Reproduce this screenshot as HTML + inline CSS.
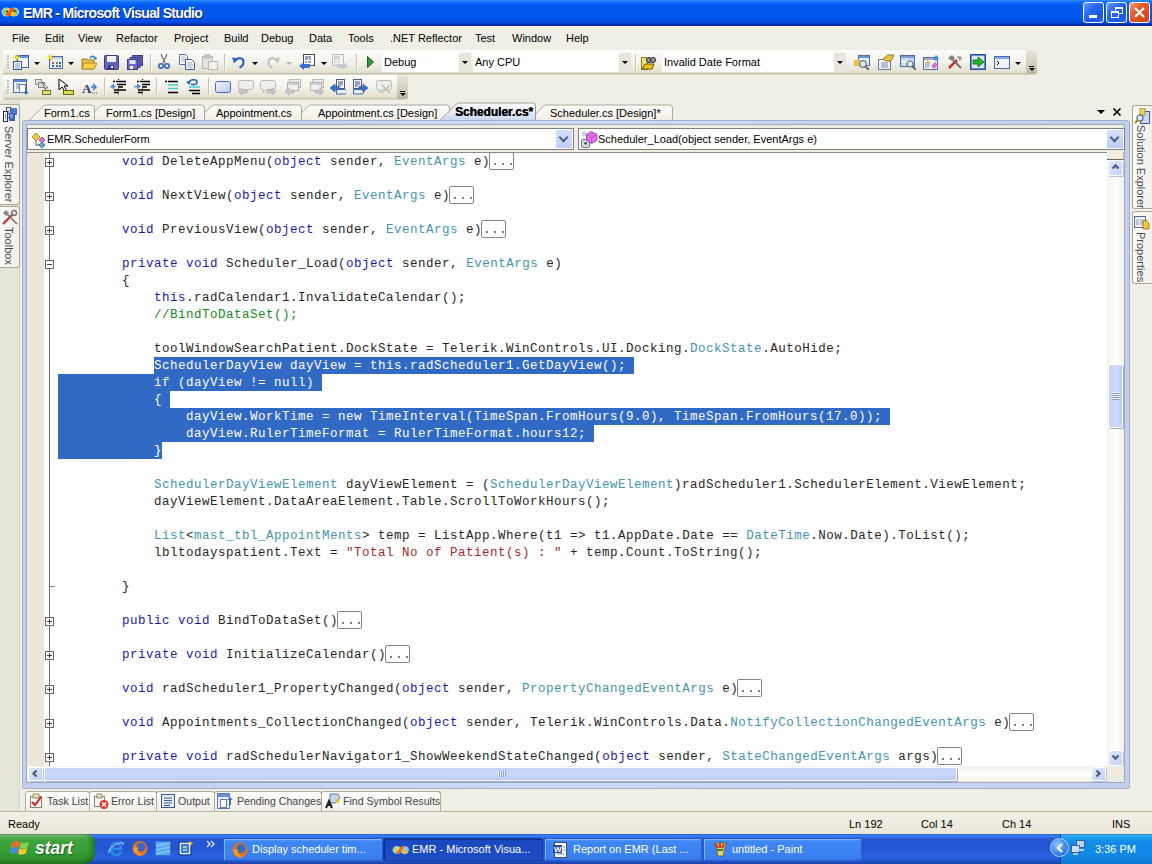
<!DOCTYPE html><html><head><meta charset="utf-8"><style>*{margin:0;padding:0;box-sizing:border-box}
html,body{width:1152px;height:864px;overflow:hidden;background:#F0EFE6;font-family:"Liberation Sans",sans-serif;font-size:11px;color:#000;position:relative}
.a{position:absolute}
#title{left:0;top:0;width:1152px;height:26px;background:linear-gradient(#3A93FF 0px,#1C7CFF 1px,#0A66F8 3px,#0059EF 6px,#0057EC 17px,#0050E4 21px,#0046D6 23px,#0036BA 24px,#0024A0 26px)}
#ttext{left:23px;top:5px;color:#fff;font-weight:bold;font-size:14px;letter-spacing:-0.68px;text-shadow:1px 1px 0 #0A1E7A;white-space:nowrap}
#menu{left:0;top:26px;width:1152px;height:24px;background:#F0EFE5;border-top:1px solid #FBFBF6}
.mi{top:32px;white-space:nowrap}
.tb{position:absolute;background:linear-gradient(#FCFCF9 0%,#F4F3EC 45%,#E6E3D3 85%,#D6D2C0 100%);border-radius:0 3px 3px 0}
.ico{position:absolute;width:16px;height:16px}
.dd{position:absolute;width:0;height:0;border-left:3px solid transparent;border-right:3px solid transparent;border-top:3px solid #000}
.sep{position:absolute;width:1px;height:17px;background:#C5C2B2;box-shadow:1px 0 0 #FFF}
.combo{position:absolute;background:#fff;height:19px;top:53px;white-space:nowrap;padding-left:2px;line-height:19px}
.cbtn{position:absolute;right:0;top:0;width:12px;height:19px;background:#E8E6DC}
.cbtn:after{content:"";position:absolute;left:3px;top:8px;border-left:3px solid transparent;border-right:3px solid transparent;border-top:3px solid #000}
.dbox{background:#fff;border:1px solid #7F7F7F}
.dbtn{position:absolute;right:1px;top:1px;width:16px;height:18px;background:linear-gradient(#D6E1FB,#BCCDF6)}
.dbtn:after{content:"";position:absolute;left:4px;top:4px;width:5px;height:5px;border-right:2px solid #4D6185;border-bottom:2px solid #4D6185;transform:rotate(45deg)}
.dtext{white-space:nowrap}
.code{font-family:"Liberation Mono",monospace;font-size:12.5px;letter-spacing:0.5px;line-height:17px;white-space:pre;color:#262626}
.k{color:#1A1AB4}.t{color:#4494B0}.s{color:#A52A2A}.c{color:#168A16}
.box{position:absolute;width:25px;height:18px;border:1px solid #858585;border-radius:2px;background:#fff}
.dots{position:absolute;left:4px;top:10px;width:2px;height:2px;background:#808080;box-shadow:8px 0 0 #808080,16px 0 0 #808080}
.ob{position:absolute;left:45px;width:9px;height:9px;border:1px solid #666;background:#fff}
.ob:before{content:"";position:absolute;left:1px;top:3px;width:5px;height:1px;background:#404040}
.ob.p:after{content:"";position:absolute;left:3px;top:1px;width:1px;height:5px;background:#404040}
.sbtn{position:absolute;width:16px;height:15px;background:linear-gradient(#DDE6FB,#C3D2F6);border-radius:2px;border:1px solid #BFCDF3}
.vt{position:absolute;transform-origin:0 0;transform:rotate(90deg);white-space:nowrap;color:#4A4A4A}
.task{position:absolute;top:838px;height:23px;border-radius:2px;color:#fff;font-size:11px;line-height:21px;white-space:nowrap;padding-left:28px}
</style></head><body>
<div id="title" class="a"></div>
<div id="ttext" class="a">EMR - Microsoft Visual Studio</div>
<svg class="a" style="left:1px;top:6px" width="19" height="12" viewBox="0 0 19 12"><ellipse cx="5.5" cy="6" rx="5" ry="4.6" fill="#CDEBD0" opacity=".85"/><ellipse cx="13" cy="6" rx="5.2" ry="4.6" fill="#BCE0F0" opacity=".85"/><ellipse cx="5.5" cy="6" rx="3.6" ry="3.4" fill="#8CCB6A"/><ellipse cx="13" cy="6.3" rx="3.8" ry="3.4" fill="#6ABF7A"/><circle cx="6.5" cy="5" r="2.2" fill="#F5D23A"/><path d="M5 9.5L9.5 2h4L8.5 10.5z" fill="#F05A1E"/><circle cx="12.5" cy="8" r="2.4" fill="#F5C51E"/><circle cx="6" cy="5.5" r="1" fill="#1A1A1A"/><circle cx="13.6" cy="5" r="1" fill="#1A1A1A"/></svg>
<div class="a" style="left:1083px;top:2px;width:21px;height:21px;border:1px solid #fff;border-radius:3px;background:linear-gradient(135deg,#6A9CFF 0%,#2A6AF4 35%,#1A58E8 70%,#2A62E8 100%)"><div class="a" style="left:5px;top:12px;width:8px;height:3px;background:#fff"></div></div>
<div class="a" style="left:1106px;top:2px;width:21px;height:21px;border:1px solid #fff;border-radius:3px;background:linear-gradient(135deg,#6A9CFF 0%,#2A6AF4 35%,#1A58E8 70%,#2A62E8 100%)"><div class="a" style="left:8px;top:4px;width:8px;height:7px;border:1px solid #fff;border-top-width:2px"></div><div class="a" style="left:4px;top:8px;width:8px;height:7px;border:1px solid #fff;border-top-width:2px;background:#2A64EE"></div></div>
<div class="a" style="left:1129px;top:2px;width:21px;height:21px;border:1px solid #fff;border-radius:3px;background:linear-gradient(135deg,#F0A080 0%,#E4602E 35%,#D8481A 75%,#D04A20 100%)"><svg class="a" style="left:3px;top:3px" width="13" height="13" viewBox="0 0 13 13"><path d="M2 2l9 9M11 2l-9 9" stroke="#fff" stroke-width="2.2"/></svg></div>

<div id="menu" class="a"></div>
<div class="a mi" style="left:12px">File</div>
<div class="a mi" style="left:45px">Edit</div>
<div class="a mi" style="left:78px">View</div>
<div class="a mi" style="left:116px">Refactor</div>
<div class="a mi" style="left:174px">Project</div>
<div class="a mi" style="left:224px">Build</div>
<div class="a mi" style="left:261px">Debug</div>
<div class="a mi" style="left:309px">Data</div>
<div class="a mi" style="left:348px">Tools</div>
<div class="a mi" style="left:390px">.NET Reflector</div>
<div class="a mi" style="left:475px">Test</div>
<div class="a mi" style="left:512px">Window</div>
<div class="a mi" style="left:566px">Help</div>
<div class="tb" style="left:3px;top:50px;width:1034px;height:25px"></div>
<div class="a" style="left:4px;top:73px;width:1032px;height:1px;background:#C9C5B2"></div>
<div class="a" style="left:7px;top:55px;width:2px;height:2px;background:#C1BEB0;box-shadow:1px 1px 0 #fff"></div>
<div class="a" style="left:7px;top:58px;width:2px;height:2px;background:#C1BEB0;box-shadow:1px 1px 0 #fff"></div>
<div class="a" style="left:7px;top:61px;width:2px;height:2px;background:#C1BEB0;box-shadow:1px 1px 0 #fff"></div>
<div class="a" style="left:7px;top:64px;width:2px;height:2px;background:#C1BEB0;box-shadow:1px 1px 0 #fff"></div>
<div class="a" style="left:7px;top:67px;width:2px;height:2px;background:#C1BEB0;box-shadow:1px 1px 0 #fff"></div>
<div class="a" style="left:1026px;top:50px;width:11px;height:24px;border-radius:0 3px 3px 0;background:linear-gradient(#E9E7DC,#CDCABA 70%,#B8B49F)"></div>
<div class="a" style="left:1029px;top:66px;width:5px;height:1px;background:#000"></div>
<div class="a" style="left:1029px;top:68px;width:0;height:0;border-left:3px solid transparent;border-right:3px solid transparent;border-top:3px solid #000"></div>
<div class="tb" style="left:3px;top:75px;width:405px;height:25px"></div>
<div class="a" style="left:4px;top:98px;width:403px;height:1px;background:#C9C5B2"></div>
<div class="a" style="left:7px;top:80px;width:2px;height:2px;background:#C1BEB0;box-shadow:1px 1px 0 #fff"></div>
<div class="a" style="left:7px;top:83px;width:2px;height:2px;background:#C1BEB0;box-shadow:1px 1px 0 #fff"></div>
<div class="a" style="left:7px;top:86px;width:2px;height:2px;background:#C1BEB0;box-shadow:1px 1px 0 #fff"></div>
<div class="a" style="left:7px;top:89px;width:2px;height:2px;background:#C1BEB0;box-shadow:1px 1px 0 #fff"></div>
<div class="a" style="left:7px;top:92px;width:2px;height:2px;background:#C1BEB0;box-shadow:1px 1px 0 #fff"></div>
<div class="a" style="left:397px;top:75px;width:11px;height:24px;border-radius:0 3px 3px 0;background:linear-gradient(#E9E7DC,#CDCABA 70%,#B8B49F)"></div>
<div class="a" style="left:400px;top:91px;width:5px;height:1px;background:#000"></div>
<div class="a" style="left:400px;top:93px;width:0;height:0;border-left:3px solid transparent;border-right:3px solid transparent;border-top:3px solid #000"></div>
<svg class="a" style="left:13px;top:54px" width="16" height="16" viewBox="0 0 16 16"><rect x="4.5" y="1.5" width="11" height="12" fill="#F4F8FF" stroke="#3B5CAA"/><rect x="5" y="2" width="10" height="2" fill="#6A96E0"/><path d="M3.5 0v7M0 3.5h7M1 1l5 5M6 1L1 6" stroke="#F2D438" stroke-width="1"/><rect x="0.5" y="7.5" width="8" height="8" fill="#fff" stroke="#3B5CAA"/><path d="M2 10h5M2 12h5M2 14h5" stroke="#7A90C8"/></svg>
<div class="dd" style="left:34px;top:62px;border-top-color:#000"></div>
<svg class="a" style="left:47px;top:54px" width="16" height="16" viewBox="0 0 16 16"><rect x="2.5" y="2.5" width="13" height="12" fill="#EEF4FA" stroke="#4C6CA8"/><rect x="3" y="3" width="12" height="2" fill="#BFD0EA"/><path d="M3.5 0v7M0 3.5h7M1 1l5 5M6 1L1 6" stroke="#F2D438" stroke-width="1"/><rect x="5" y="8" width="2" height="2" fill="#C04060"/><rect x="9" y="8" width="2" height="2" fill="#5A9A3A"/><rect x="12" y="8" width="2" height="2" fill="#4060B0"/><rect x="5" y="11" width="2" height="2" fill="#4060B0"/><rect x="9" y="11" width="2" height="2" fill="#4060B0"/><rect x="12" y="11" width="2" height="2" fill="#3A7A3A"/></svg>
<div class="dd" style="left:68px;top:62px;border-top-color:#000"></div>
<svg class="a" style="left:81px;top:55px" width="16" height="16" viewBox="0 0 16 16"><path d="M1 4h5l1 1h6v9H1z" fill="#E8C04A" stroke="#A07A18"/><path d="M3 8h13l-3 6H1z" fill="#F7CF4A" stroke="#B08A20"/><path d="M9 3c2-3 5-2 5 1" fill="none" stroke="#3C78C8" stroke-width="1.5"/><path d="M12 3l3 2 1-3z" fill="#3C78C8"/></svg>
<svg class="a" style="left:104px;top:55px" width="16" height="16" viewBox="0 0 16 16"><rect x="0.5" y="0.5" width="14" height="14" rx="1" fill="#6264BC" stroke="#3A3C88"/><rect x="3" y="1" width="9" height="6" fill="#F2F4FC"/><rect x="4" y="10" width="6" height="4" fill="#3A3C80"/><rect x="7" y="11" width="2" height="2" fill="#fff"/></svg>
<svg class="a" style="left:127px;top:55px" width="16" height="16" viewBox="0 0 16 16"><rect x="5.5" y="0.5" width="10" height="10" fill="#6264BC" stroke="#3A3C88"/><rect x="3" y="2.5" width="10" height="10" fill="#6264BC" stroke="#3A3C88"/><rect x="0.5" y="4.5" width="10" height="10" fill="#6A6CC4" stroke="#3A3C88"/><rect x="2.5" y="5" width="6" height="4" fill="#E0E4F8"/><rect x="3" y="11" width="3" height="3" fill="#fff"/></svg>
<div class="sep" style="left:150px;top:54px"></div>
<svg class="a" style="left:156px;top:54px" width="16" height="16" viewBox="0 0 16 16"><path d="M5 0l4 9M11 0L7 9" stroke="#6A6A70" stroke-width="1.1"/><circle cx="5" cy="12" r="2.2" fill="none" stroke="#2F5FC0" stroke-width="1.5"/><circle cx="11" cy="12" r="2.2" fill="none" stroke="#2F5FC0" stroke-width="1.5"/></svg>
<svg class="a" style="left:179px;top:54px" width="16" height="16" viewBox="0 0 16 16"><path d="M0.5 0.5h6l2 2v8h-8z" fill="#fff" stroke="#5070B8"/><path d="M2 3h4M2 5h5M2 7h5" stroke="#7A90C8" stroke-width=".7"/><path d="M6.5 5.5h6l3 3v7h-9z" fill="#fff" stroke="#3A5AA8"/><path d="M8 9h5M8 11h6M8 13h6" stroke="#6A84C0" stroke-width=".7"/></svg>
<svg class="a" style="left:202px;top:54px" width="16" height="16" viewBox="0 0 16 16"><rect x="0.5" y="2.5" width="10" height="12" fill="#E4E4E0" stroke="#B8B8B4"/><rect x="3" y="1" width="5" height="3" fill="#D0D0CC" stroke="#B0B0AC"/><rect x="6.5" y="7.5" width="9" height="8" fill="#F0F0EC" stroke="#B8B8B4"/></svg>
<div class="sep" style="left:224px;top:54px"></div>
<svg class="a" style="left:231px;top:54px" width="16" height="16" viewBox="0 0 16 16"><path d="M4.5 6.5C7 3 12.5 3.5 12.5 8c0 2.5-1.5 4.5-4 5.5" fill="none" stroke="#2F62C8" stroke-width="2.2"/><path d="M1 3.5l6.5 1-4.5 5z" fill="#2F62C8"/></svg>
<div class="dd" style="left:252px;top:62px;border-top-color:#000"></div>
<svg class="a" style="left:265px;top:54px" width="16" height="16" viewBox="0 0 16 16"><path d="M11.5 6.5C9 3 3.5 3.5 3.5 8c0 2.5 1.5 4.5 4 5.5" fill="none" stroke="#C4C4C0" stroke-width="2.2"/><path d="M15 3.5l-6.5 1 4.5 5z" fill="#C4C4C0"/></svg>
<div class="dd" style="left:286px;top:62px;border-top-color:#B8B8B4"></div>
<svg class="a" style="left:299px;top:54px" width="16" height="16" viewBox="0 0 16 16"><rect x="4.5" y="0.5" width="11" height="11" fill="#fff" stroke="#404850"/><path d="M6 3h6M6 5h3M10 5h2M6 8h2M9 8h3" stroke="#2A3E9A"/><path d="M0 12l5-4v2h6v4H5v2z" fill="#3A70D0"/></svg>
<div class="dd" style="left:321px;top:62px;border-top-color:#000"></div>
<svg class="a" style="left:332px;top:54px" width="16" height="16" viewBox="0 0 16 16"><rect x="0.5" y="0.5" width="11" height="11" fill="#F4F4F2" stroke="#BBBBB8"/><path d="M2 3h6M2 5h3M6 5h2M2 8h2M5 8h3" stroke="#B4B4B8"/><path d="M16 12l-5-4v2H5v4h6v2z" fill="#C8C8D4"/></svg>
<div class="sep" style="left:356px;top:54px"></div>
<svg class="a" style="left:364px;top:55px" width="16" height="16" viewBox="0 0 16 16"><path d="M3.5 1.5l6 5.5-6 5.5z" fill="#2E9A3A" stroke="#1E5A24"/></svg>
<div class="combo" style="left:382px;width:89px">Debug<div class="cbtn"></div></div>
<div class="combo" style="left:473px;width:158px">Any CPU<div class="cbtn"></div></div>
<div class="sep" style="left:635px;top:54px"></div>
<svg class="a" style="left:640px;top:55px" width="16" height="16" viewBox="0 0 16 16"><path d="M1.5 2.5h5l1 2v10h-6z" fill="#F0E27A" stroke="#8A7A20"/><path d="M2 14l3-5h9l-2 5z" fill="#F3C41A" stroke="#6A5010"/><circle cx="9" cy="5" r="2.5" fill="#999" stroke="#222"/><circle cx="13" cy="5" r="2.5" fill="#999" stroke="#222"/></svg>
<div class="combo" style="left:662px;width:184px">Invalid Date Format<div class="cbtn"></div></div>
<svg class="a" style="left:854px;top:54px" width="16" height="16" viewBox="0 0 16 16"><rect x="4.5" y="1.5" width="11" height="10" fill="#EAF0FA" stroke="#4A6AB0"/><rect x="5" y="2" width="10" height="2" fill="#6A90D8"/><path d="M0 6h6v6H0z" fill="#E8C04A"/><circle cx="9" cy="10" r="3.3" fill="#D8E8F4" stroke="#707880" stroke-width="1.2"/><path d="M11 12l4 4" stroke="#606870" stroke-width="1.8"/></svg>
<svg class="a" style="left:878px;top:54px" width="16" height="16" viewBox="0 0 16 16"><rect x="0.5" y="5.5" width="12" height="10" fill="#F2F5FA" stroke="#6A7A9A"/><path d="M3 9h7M3 11h7M3 13h7" stroke="#7A8AAA"/><path d="M5 5l5-4h6l-3 6H7z" fill="#E8C048" stroke="#9A7A20"/></svg>
<svg class="a" style="left:900px;top:54px" width="16" height="16" viewBox="0 0 16 16"><rect x="0.5" y="1.5" width="14" height="11" fill="#CFDCF0" stroke="#4A6AB0"/><rect x="1" y="2" width="13" height="2" fill="#7A9AD8"/><path d="M2 8c3-2 6 2 8 0" stroke="#fff" stroke-width="1.5" fill="none"/><circle cx="10" cy="10" r="3" fill="#E0ECF8" stroke="#607080" stroke-width="1.2"/><path d="M12 12l4 4" stroke="#506070" stroke-width="1.8"/></svg>
<svg class="a" style="left:923px;top:54px" width="16" height="16" viewBox="0 0 16 16"><rect x="0.5" y="3.5" width="14" height="12" fill="#F4F6FA" stroke="#5A6A9A"/><rect x="1" y="4" width="13" height="2" fill="#9AAAD0"/><path d="M2 9h5M2 11h5M2 13h4" stroke="#8090B0"/><path d="M8 12l4-4 3 3-4 4z" fill="#D070C8"/><path d="M10 5l3-4 3 3-3 3z" fill="#4A90D8"/><path d="M4 6l3 2-3 2z" fill="#F0C020"/></svg>
<svg class="a" style="left:947px;top:54px" width="16" height="16" viewBox="0 0 16 16"><path d="M2 14l8-8" stroke="#D03030" stroke-width="2.5"/><path d="M14 14L6 6" stroke="#707070" stroke-width="2"/><path d="M1 4l4-3 3 3-3 3z" fill="#808080"/><path d="M10 2l5 1-2 4z" fill="#909090"/></svg>
<svg class="a" style="left:970px;top:54px" width="16" height="16" viewBox="0 0 16 16"><rect x="0.5" y="0.5" width="15" height="15" fill="#6090D8" stroke="#2A4A90"/><rect x="2" y="2" width="12" height="12" fill="#D8E6F8"/><path d="M3 6h5V3l6 5-6 5v-3H3z" fill="#2AB02A" stroke="#107010" stroke-width=".8"/></svg>
<svg class="a" style="left:994px;top:54px" width="16" height="16" viewBox="0 0 16 16"><rect x="0.5" y="2.5" width="15" height="12" fill="#F0F4FC" stroke="#4A6AB0"/><rect x="1" y="3" width="14" height="2" fill="#8AAAE0"/><path d="M3 7l2 2-2 2" stroke="#000" fill="none"/></svg>
<div class="dd" style="left:1015px;top:62px;border-top-color:#000"></div>
<svg class="a" style="left:13px;top:79px" width="16" height="16" viewBox="0 0 16 16"><rect x="0.5" y="0.5" width="13" height="13" fill="#F4F8FC" stroke="#4A6AB0"/><rect x="1" y="1" width="12" height="2" fill="#5A86D6"/><path d="M3 5h4M3 7h4M3 9h4" stroke="#7A8AAA"/><rect x="6.5" y="5.5" width="6" height="8" fill="#fff" stroke="#6A7AAA"/><path d="M13 8v7M11 13l2 2 2-2" stroke="#3A70C0" stroke-width="1.2" fill="none"/></svg>
<svg class="a" style="left:35px;top:79px" width="16" height="16" viewBox="0 0 16 16"><rect x="0.5" y="0.5" width="6" height="5" fill="#E8E8E8" stroke="#888"/><rect x="3.5" y="3.5" width="6" height="5" fill="#D8D8D8" stroke="#888"/><path d="M7 3l6 6h-3l1 3z" fill="#fff" stroke="#777"/><rect x="7.5" y="11.5" width="8" height="4" fill="#E6E070" stroke="#707030"/></svg>
<svg class="a" style="left:58px;top:79px" width="16" height="16" viewBox="0 0 16 16"><path d="M1 0v11l3-3 3 5 2-1-3-5h4z" fill="#fff" stroke="#000"/><rect x="5.5" y="11.5" width="10" height="4" fill="#D8E050" stroke="#606818"/></svg>
<svg class="a" style="left:82px;top:79px" width="16" height="16" viewBox="0 0 16 16"><text x="0" y="14" font-family="Liberation Serif" font-weight="bold" font-size="13" fill="#2A3A78">A</text><path d="M9 8h5M11 5l3 3-3 3" stroke="#4A7AD0" stroke-width="1.6" fill="none"/><path d="M10 14h1M12 14h1M14 14h1" stroke="#444"/></svg>
<div class="sep" style="left:104px;top:78px"></div>
<svg class="a" style="left:110px;top:79px" width="16" height="16" viewBox="0 0 16 16"><path d="M3 2.5h2M6 2.5h10M7 5.5h9M8 8h5M4 11h12M4 13.5h5" stroke="#000" stroke-width="1.4"/><path d="M8 0.5h1M8 16h1M8 10h1" stroke="#000"/><path d="M0 7.5l4-3v6z" fill="#5A88D8"/><path d="M3 7.5h3" stroke="#5A88D8" stroke-width="1.4"/></svg>
<svg class="a" style="left:134px;top:79px" width="16" height="16" viewBox="0 0 16 16"><path d="M3 2.5h2M6 2.5h10M8 5.5h8M8 8h5M4 11h12M4 13.5h5" stroke="#000" stroke-width="1.4"/><path d="M8 0.5h1M8 16h1M8 10h1" stroke="#000"/><path d="M7 7.5l-4-3v6z" fill="#5A88D8"/><path d="M0 7.5h4" stroke="#5A88D8" stroke-width="1.4"/></svg>
<div class="sep" style="left:156px;top:78px"></div>
<svg class="a" style="left:164px;top:79px" width="16" height="16" viewBox="0 0 16 16"><path d="M1 2.5h2M4 2.5h10M4 13.5h10" stroke="#000" stroke-width="1.3"/><path d="M4 6h10M4 9.5h10" stroke="#40D0D0" stroke-width="1.5"/></svg>
<svg class="a" style="left:186px;top:79px" width="16" height="16" viewBox="0 0 16 16"><path d="M4 3c0-3 7-3 7 0s-4 3-6 2" fill="none" stroke="#2A6AC0" stroke-width="1.6"/><path d="M0 3.5l4-2.5v5z" fill="#2A6AC0"/><path d="M3 8h11" stroke="#40D0D0" stroke-width="1.5"/><path d="M3 11.5h11M6 14.5h8" stroke="#000" stroke-width="1.3"/></svg>
<div class="sep" style="left:208px;top:78px"></div>
<svg class="a" style="left:215px;top:80px" width="16" height="16" viewBox="0 0 16 16"><defs><linearGradient id="rg" x1="0" y1="0" x2="1" y2="1"><stop offset="0" stop-color="#F4F6FE"/><stop offset="1" stop-color="#B8C8F0"/></linearGradient></defs><rect x="0.5" y="1.5" width="15" height="11" rx="2" fill="url(#rg)" stroke="#4A6AC0"/></svg>
<svg class="a" style="left:238px;top:79px" width="16" height="16" viewBox="0 0 16 16"><path d="M2.5 1.5h11a2 2 0 0 1 2 2v5a2 2 0 0 1-2 2h-7l-3 3v-3h-1a2 2 0 0 1-2-2v-5a2 2 0 0 1 2-2z" fill="#EEEEEA" stroke="#B8B8B4"/><path d="M0 12.5l4-3.5v2h5v3H4v2z" fill="#C8C8CC" stroke="#A8A8AC" stroke-width=".6"/></svg>
<svg class="a" style="left:260px;top:79px" width="16" height="16" viewBox="0 0 16 16"><path d="M2.5 1.5h11a2 2 0 0 1 2 2v5a2 2 0 0 1-2 2h-7l-3 3v-3h-1a2 2 0 0 1-2-2v-5a2 2 0 0 1 2-2z" fill="#EEEEEA" stroke="#B8B8B4"/><path d="M16 12.5l-4-3.5v2H7v3h5v2z" fill="#C8C8CC" stroke="#A8A8AC" stroke-width=".6"/></svg>
<svg class="a" style="left:285px;top:79px" width="16" height="16" viewBox="0 0 16 16"><rect x="4.5" y="0.5" width="11" height="8" fill="#E8E8E6" stroke="#B8B8B4"/><rect x="2.5" y="3.5" width="11" height="8" fill="#F0F0EE" stroke="#B0B0AC"/><path d="M3 5h10" stroke="#C8C8C4" stroke-width="1.5"/><path d="M0 12.5l4-3.5v2h5v3H4v2z" fill="#C8C8CC" stroke="#A8A8AC" stroke-width=".6"/></svg>
<svg class="a" style="left:308px;top:79px" width="16" height="16" viewBox="0 0 16 16"><rect x="4.5" y="0.5" width="11" height="8" fill="#E8E8E6" stroke="#B8B8B4"/><rect x="2.5" y="3.5" width="11" height="8" fill="#F0F0EE" stroke="#B0B0AC"/><path d="M3 5h10" stroke="#C8C8C4" stroke-width="1.5"/><path d="M16 12.5l-4-3.5v2H7v3h5v2z" fill="#C8C8CC" stroke="#A8A8AC" stroke-width=".6"/></svg>
<svg class="a" style="left:330px;top:79px" width="16" height="16" viewBox="0 0 16 16"><rect x="6.5" y="0.5" width="8" height="9" fill="#F8F8FA" stroke="#4A5A8A"/><path d="M8 3h5M8 5h5M8 7h3" stroke="#3A4A7A"/><path d="M6.5 10.5h8a1.5 1.5 0 0 1 0 4.5h-8z" fill="#E8EEF8" stroke="#4A6AB0"/><path d="M0 9l5-4v2.5h4v3H5V13z" fill="#3A70D0" stroke="#2A50A0" stroke-width=".6"/></svg>
<svg class="a" style="left:352px;top:79px" width="16" height="16" viewBox="0 0 16 16"><rect x="1.5" y="0.5" width="8" height="9" fill="#F8F8FA" stroke="#4A5A8A"/><path d="M3 3h5M3 5h5M3 7h3" stroke="#3A4A7A"/><path d="M1.5 10.5h8a1.5 1.5 0 0 1 0 4.5h-8z" fill="#E8EEF8" stroke="#4A6AB0"/><path d="M16 9l-5-4v2.5H7v3h4V13z" fill="#3A70D0" stroke="#2A50A0" stroke-width=".6"/></svg>
<svg class="a" style="left:376px;top:79px" width="16" height="16" viewBox="0 0 16 16"><path d="M2.5 1.5h11a2 2 0 0 1 2 2v5a2 2 0 0 1-2 2h-7l-3 3v-3h-1a2 2 0 0 1-2-2v-5a2 2 0 0 1 2-2z" fill="#EEEEEA" stroke="#B8B8B4"/><path d="M6 6l8 8M14 6l-8 8" stroke="#C0C0BC" stroke-width="1.5"/></svg>
<div class="a" style="left:0;top:100px;width:20px;height:711px;background:#E4E4D7;border-right:1px solid #D6D5C6"></div>
<div class="a" style="left:0;top:104px;width:20px;height:101px;background:linear-gradient(90deg,#FCFCFA,#F2F0E8);border:1px solid #ACA899;border-left:none;border-radius:0 3px 3px 0"></div>
<svg class="a" style="left:2px;top:106px" width="17" height="17" viewBox="0 0 17 17"><rect x="4.5" y="1.5" width="4" height="10" fill="#F4F6FA" stroke="#404A70"/><rect x="1.5" y="5.5" width="4" height="10" fill="#F4F6FA" stroke="#2A2A6A"/><path d="M3.5 8v5M6.5 4v5" stroke="#8A90B0"/><rect x="9" y="2" width="6" height="7" fill="#4A7AD8"/><rect x="7" y="7" width="6" height="8" fill="#3A62C8"/><rect x="8" y="8" width="3" height="4" fill="#6A9AF0"/></svg>
<div class="vt" style="left:15px;top:126px">Server Explorer</div>
<div class="a" style="left:0;top:206px;width:20px;height:62px;background:linear-gradient(90deg,#FCFCFA,#F2F0E8);border:1px solid #ACA899;border-left:none;border-radius:0 3px 3px 0"></div>
<svg class="a" style="left:2px;top:209px" width="16" height="16" viewBox="0 0 16 16"><path d="M1 15L11 5" stroke="#C03030" stroke-width="2.2"/><path d="M15 15L5 5" stroke="#707070" stroke-width="1.6"/><path d="M1 4l3-3 3 3-3 3z" fill="#888"/><circle cx="12" cy="4" r="2.5" fill="none" stroke="#777" stroke-width="1.4"/></svg>
<div class="vt" style="left:15px;top:227px">Toolbox</div>
<div class="a" style="left:1132px;top:105px;width:20px;height:104px;background:linear-gradient(90deg,#FCFCFA,#F2F0E8);border:1px solid #ACA899;border-right:none;border-radius:3px 0 0 3px"></div>
<svg class="a" style="left:1134px;top:108px" width="16" height="16" viewBox="0 0 16 16"><rect x="6.5" y="3.5" width="9" height="12" fill="#C8D8F0" stroke="#3A5AA8"/><path d="M6 0h5v7H6z" fill="#F0D060" stroke="#A08020" stroke-width=".8"/><circle cx="6" cy="10" r="3" fill="#E0ECF8" stroke="#606870" stroke-width="1.2"/><path d="M4 12l-3 3" stroke="#B08030" stroke-width="2"/></svg>
<div class="vt" style="left:1147px;top:125px">Solution Explorer</div>
<div class="a" style="left:1132px;top:211px;width:20px;height:73px;background:linear-gradient(90deg,#FCFCFA,#F2F0E8);border:1px solid #ACA899;border-right:none;border-radius:3px 0 0 3px"></div>
<svg class="a" style="left:1134px;top:214px" width="16" height="16" viewBox="0 0 16 16"><rect x="0.5" y="2.5" width="11" height="11" fill="#F0F4FA" stroke="#5A6A9A"/><path d="M2 6h3M2 8h3M2 10h3M6 6h4M6 8h4M6 10h4" stroke="#8A9ABA"/><path d="M9 7l3-1 3 4v5H9z" fill="#F0C840" stroke="#8A6A10" stroke-width=".8"/></svg>
<div class="vt" style="left:1147px;top:232px">Properties</div>

<svg class="a" style="left:0;top:0" width="1152" height="130" viewBox="0 0 1152 130"><defs><linearGradient id="gi" x1="0" y1="0" x2="0" y2="1"><stop offset="0" stop-color="#FDFDFB"/><stop offset="1" stop-color="#F1EFE6"/></linearGradient><linearGradient id="ga" x1="0" y1="0" x2="0" y2="1"><stop offset="0" stop-color="#FCFDFE"/><stop offset=".5" stop-color="#E9EFF8"/><stop offset="1" stop-color="#C9D8F0"/></linearGradient></defs><path d="M529 120L543 106Q544 105 546 105H669Q672 105 672 108V120Z" fill="url(#gi)" stroke="none"/><path d="M529 120L543 106Q544 105 546 105H669Q672 105 672 108V120" fill="none" stroke="#ACA899" stroke-width="1" transform="translate(0.5,0)"/><path d="M294 120L308 106Q309 105 311 105H446Q449 105 449 108V120Z" fill="url(#gi)" stroke="none"/><path d="M294 120L308 106Q309 105 311 105H446Q449 105 449 108V120" fill="none" stroke="#ACA899" stroke-width="1" transform="translate(0.5,0)"/><path d="M197 120L211 106Q212 105 214 105H298Q301 105 301 108V120Z" fill="url(#gi)" stroke="none"/><path d="M197 120L211 106Q212 105 214 105H298Q301 105 301 108V120" fill="none" stroke="#ACA899" stroke-width="1" transform="translate(0.5,0)"/><path d="M86 120L100 106Q101 105 103 105H201Q204 105 204 108V120Z" fill="url(#gi)" stroke="none"/><path d="M86 120L100 106Q101 105 103 105H201Q204 105 204 108V120" fill="none" stroke="#ACA899" stroke-width="1" transform="translate(0.5,0)"/><path d="M29 120L43 106Q44 105 46 105H91Q94 105 94 108V120Z" fill="url(#gi)" stroke="none"/><path d="M29 120L43 106Q44 105 46 105H91Q94 105 94 108V120" fill="none" stroke="#ACA899" stroke-width="1" transform="translate(0.5,0)"/><path d="M440 120L456 104Q457 103 459 103H532Q535 103 535 106V120Z" fill="url(#ga)" stroke="none"/><path d="M440 120L456 104Q457 103 459 103H532Q535 103 535 106V120" fill="none" stroke="#9C9C98" stroke-width="1" transform="translate(0.5,0)"/></svg>
<div class="a" style="left:44px;top:107px;white-space:nowrap">Form1.cs</div>
<div class="a" style="left:106px;top:107px;white-space:nowrap">Form1.cs [Design]</div>
<div class="a" style="left:216px;top:107px;white-space:nowrap">Appointment.cs</div>
<div class="a" style="left:318px;top:107px;white-space:nowrap">Appointment.cs [Design]</div>
<div class="a" style="left:455px;top:105px;font-weight:bold;font-size:11.9px;white-space:nowrap;text-shadow:0.4px 0 0 #000">Scheduler.cs*</div>
<div class="a" style="left:550px;top:107px;white-space:nowrap">Scheduler.cs [Design]*</div>
<div class="a" style="left:1097px;top:110px;width:0;height:0;border-left:4px solid transparent;border-right:4px solid transparent;border-top:4px solid #000"></div>
<svg class="a" style="left:1112px;top:107px" width="10" height="10" viewBox="0 0 10 10"><path d="M1.5 1.5l7 7M8.5 1.5l-7 7" stroke="#000" stroke-width="1.6"/></svg>
<div class="a" style="left:22px;top:120px;width:1108px;height:669px;background:linear-gradient(90deg,#C2D0EE,#CCDAF6 50%,#C2D0EE);border:1px solid #A4B0C8;border-radius:3px 3px 2px 2px"></div>
<div class="a" style="left:26px;top:124px;width:1099px;height:659px;background:#EEECE3;border:1px solid #9DAABD"></div>
<div class="a dbox" style="left:27px;top:128px;width:547px;height:22px"><div class="dbtn"></div></div>
<div class="a dbox" style="left:578px;top:128px;width:547px;height:22px"><div class="dbtn"></div></div>
<svg class="a" style="left:31px;top:132px" width="16" height="16" viewBox="0 0 16 16"><path d="M1 5l4-4 4 4-4 4z" fill="#F0C840" stroke="#9A7A10" stroke-width=".8"/><path d="M8 8l3-3 3 3-3 3z" fill="#E070E0" stroke="#9A309A" stroke-width=".8"/><path d="M8 13l3-3 3 3-3 3z" fill="#5AAAE0" stroke="#2A6A9A" stroke-width=".8"/><path d="M5 9v4h4" stroke="#555" fill="none"/></svg>
<svg class="a" style="left:581px;top:131px" width="17" height="17" viewBox="0 0 17 17"><path d="M1 2h5M1 4h5" stroke="#9AA"/><rect x="0.5" y="8.5" width="8" height="8" rx="1.5" fill="#D8DEE4" stroke="#6A7A8A"/><path d="M2.5 11.5h4l-2 2.5z" fill="#333"/><path d="M10.5 0.5l5.5 3v6l-5.5 3-5-3v-6z" fill="#E070E8" stroke="#9A3AA8" stroke-width=".8"/><path d="M5.5 3.5l5 3 5.5-3M10.5 6.5v6" stroke="#B040C0" stroke-width=".6" fill="none"/></svg>
<div class="a dtext" style="left:47px;top:133px">EMR.SchedulerForm</div>
<div class="a dtext" style="left:598px;top:133px">Scheduler_Load(object sender, EventArgs e)</div>
<div class="a" style="left:27px;top:152px;width:1080px;height:1px;background:#8E8E8A"></div>
<div class="a" style="left:27px;top:153px;width:1080px;height:613px;background:#fff"></div>
<div class="a" style="left:27px;top:153px;width:17px;height:613px;background:linear-gradient(90deg,#E9EEF0 0px,#EEE6DA 3px,#EDE8DA 10px,#E9E7DA 17px)"></div>
<div class="a" style="left:49px;top:153px;width:1px;height:613px;background:#707070"></div>
<div class="a code" style="left:58px;top:154px">        <span class="k">void</span> DeleteAppMenu(<span class="k">object</span> sender, <span class="t">EventArgs</span> e)</div>
<div class="a code" style="left:58px;top:188px">        <span class="k">void</span> NextView(<span class="k">object</span> sender, <span class="t">EventArgs</span> e)</div>
<div class="a code" style="left:58px;top:222px">        <span class="k">void</span> PreviousView(<span class="k">object</span> sender, <span class="t">EventArgs</span> e)</div>
<div class="a code" style="left:58px;top:256px">        <span class="k">private</span> <span class="k">void</span> Scheduler_Load(<span class="k">object</span> sender, <span class="t">EventArgs</span> e)</div>
<div class="a code" style="left:58px;top:273px">        {</div>
<div class="a code" style="left:58px;top:290px">            <span class="k">this</span>.radCalendar1.InvalidateCalendar();</div>
<div class="a code" style="left:58px;top:307px">            <span class="c">//BindToDataSet();</span></div>
<div class="a code" style="left:58px;top:341px">            toolWindowSearchPatient.DockState = Telerik.WinControls.UI.Docking.<span class="t">DockState</span>.AutoHide;</div>
<div class="a code" style="left:58px;top:477px">            <span class="t">SchedulerDayViewElement</span> dayViewElement = (<span class="t">SchedulerDayViewElement</span>)radScheduler1.SchedulerElement.ViewElement;</div>
<div class="a code" style="left:58px;top:494px">            dayViewElement.DataAreaElement.Table.ScrollToWorkHours();</div>
<div class="a code" style="left:58px;top:528px">            <span class="t">List</span>&lt;<span class="t">mast_tbl_AppointMents</span>&gt; temp = ListApp.Where(t1 =&gt; t1.AppDate.Date == <span class="t">DateTime</span>.Now.Date).ToList();</div>
<div class="a code" style="left:58px;top:545px">            lbltodayspatient.Text = <span class="s">"Total No of Patient(s) : "</span> + temp.Count.ToString();</div>
<div class="a code" style="left:58px;top:579px">        }</div>
<div class="a code" style="left:58px;top:613px">        <span class="k">public</span> <span class="k">void</span> BindToDataSet()</div>
<div class="a code" style="left:58px;top:647px">        <span class="k">private</span> <span class="k">void</span> InitializeCalendar()</div>
<div class="a code" style="left:58px;top:681px">        <span class="k">void</span> radScheduler1_PropertyChanged(<span class="k">object</span> sender, <span class="t">PropertyChangedEventArgs</span> e)</div>
<div class="a code" style="left:58px;top:715px">        <span class="k">void</span> Appointments_CollectionChanged(<span class="k">object</span> sender, Telerik.WinControls.Data.<span class="t">NotifyCollectionChangedEventArgs</span> e)</div>
<div class="a code" style="left:58px;top:749px">        <span class="k">private</span> <span class="k">void</span> radSchedulerNavigator1_ShowWeekendStateChanged(<span class="k">object</span> sender, <span class="t">StateChangedEventArgs</span> args)</div>
<div class="a" style="left:154px;top:357px;width:480px;height:17px;background:#316AC5"></div>
<div class="a code" style="left:154px;top:358px;color:#fff">SchedulerDayView dayView = this.radScheduler1.GetDayView();</div>
<div class="a" style="left:58px;top:374px;width:264px;height:17px;background:#316AC5"></div>
<div class="a code" style="left:58px;top:375px;color:#fff">            if (dayView != null)</div>
<div class="a" style="left:58px;top:391px;width:112px;height:17px;background:#316AC5"></div>
<div class="a code" style="left:58px;top:392px;color:#fff">            {</div>
<div class="a" style="left:58px;top:408px;width:832px;height:17px;background:#316AC5"></div>
<div class="a code" style="left:58px;top:409px;color:#fff">                dayView.WorkTime = new TimeInterval(TimeSpan.FromHours(9.0), TimeSpan.FromHours(17.0));</div>
<div class="a" style="left:58px;top:425px;width:536px;height:17px;background:#316AC5"></div>
<div class="a code" style="left:58px;top:426px;color:#fff">                dayView.RulerTimeFormat = RulerTimeFormat.hours12;</div>
<div class="a" style="left:58px;top:442px;width:104px;height:17px;background:#316AC5"></div>
<div class="a code" style="left:58px;top:443px;color:#fff">            }</div>
<div class="box" style="left:489px;top:152px"><div class="dots"></div></div>
<div class="box" style="left:449px;top:186px"><div class="dots"></div></div>
<div class="box" style="left:481px;top:220px"><div class="dots"></div></div>
<div class="box" style="left:337px;top:611px"><div class="dots"></div></div>
<div class="box" style="left:385px;top:645px"><div class="dots"></div></div>
<div class="box" style="left:737px;top:679px"><div class="dots"></div></div>
<div class="box" style="left:1009px;top:713px"><div class="dots"></div></div>
<div class="box" style="left:937px;top:747px"><div class="dots"></div></div>
<div class="ob p" style="top:158px"></div>
<div class="ob p" style="top:192px"></div>
<div class="ob p" style="top:226px"></div>
<div class="ob p" style="top:617px"></div>
<div class="ob p" style="top:651px"></div>
<div class="ob p" style="top:685px"></div>
<div class="ob p" style="top:719px"></div>
<div class="ob p" style="top:753px"></div>
<div class="ob" style="top:260px"></div>
<div class="a" style="left:49px;top:586px;width:6px;height:1px;background:#808080"></div>
<div class="a" style="left:1107px;top:153px;width:17px;height:613px;background:linear-gradient(90deg,#F3F1E9,#FEFEFB 50%,#F3F1E9)"></div>
<div class="a" style="left:1107px;top:152px;width:17px;height:8px;background:#F2EEDD;border-bottom:1px solid #6A6A60;border-right:1px solid #C8C4B4"></div>
<div class="a" style="left:1108px;top:160px;width:15px;height:16px;border-radius:2px;background:linear-gradient(135deg,#E2EAFC,#C0D0F6);border:1px solid #fff;box-shadow:1px 1px 0 #B4C2E0"></div>
<svg class="a" style="left:1110px;top:162px" width="11" height="11" viewBox="0 0 11 11"><path d="M2.5 6.5L5.5 3.5 8.5 6.5" stroke="#4D6185" stroke-width="2.4" fill="none"/></svg>
<div class="a" style="left:1108px;top:750px;width:15px;height:16px;border-radius:2px;background:linear-gradient(135deg,#E2EAFC,#C0D0F6);border:1px solid #fff;box-shadow:1px 1px 0 #B4C2E0"></div>
<svg class="a" style="left:1110px;top:752px" width="11" height="11" viewBox="0 0 11 11"><path d="M2.5 3.5L5.5 6.5 8.5 3.5" stroke="#4D6185" stroke-width="2.4" fill="none"/></svg>
<div class="a" style="left:1108px;top:364px;width:15px;height:64px;border-radius:2px;background:linear-gradient(90deg,#C4D2F8,#D0DCFB 50%,#BCCCF4);border:1px solid #fff;box-shadow:1px 1px 0 #9AACD6"></div>
<div class="a" style="left:1112px;top:392px;width:7px;height:1px;background:#EEF2FE;box-shadow:0 2px 0 #EEF2FE,0 4px 0 #EEF2FE,0 6px 0 #EEF2FE,0 1px 0 #8CA0D0,0 3px 0 #8CA0D0,0 5px 0 #8CA0D0,0 7px 0 #8CA0D0"></div>
<div class="a" style="left:27px;top:766px;width:1080px;height:15px;background:linear-gradient(#F3F1E9,#FEFEFB 50%,#F3F1E9)"></div>
<div class="a" style="left:28px;top:767px;width:15px;height:14px;border-radius:2px;background:linear-gradient(135deg,#E2EAFC,#C0D0F6);border:1px solid #fff;box-shadow:1px 1px 0 #B4C2E0"></div>
<svg class="a" style="left:30px;top:768px" width="11" height="11" viewBox="0 0 11 11"><path d="M6.5 2.5L3.5 5.5 6.5 8.5" stroke="#4D6185" stroke-width="2.4" fill="none"/></svg>
<div class="a" style="left:1091px;top:767px;width:15px;height:14px;border-radius:2px;background:linear-gradient(135deg,#E2EAFC,#C0D0F6);border:1px solid #fff;box-shadow:1px 1px 0 #B4C2E0"></div>
<svg class="a" style="left:1093px;top:768px" width="11" height="11" viewBox="0 0 11 11"><path d="M3.5 2.5L6.5 5.5 3.5 8.5" stroke="#4D6185" stroke-width="2.4" fill="none"/></svg>
<div class="a" style="left:44px;top:767px;width:913px;height:14px;border-radius:2px;background:linear-gradient(#C4D2F8,#CCD8FA 50%,#BCCCF4);border:1px solid #fff;box-shadow:1px 1px 0 #9AACD6"></div>
<div class="a" style="left:498px;top:771px;width:1px;height:6px;background:#EEF2FE;box-shadow:2px 0 0 #EEF2FE,4px 0 0 #EEF2FE,6px 0 0 #EEF2FE,1px 0 0 #8CA0D0,3px 0 0 #8CA0D0,5px 0 0 #8CA0D0,7px 0 0 #8CA0D0"></div>
<div class="a" style="left:1107px;top:766px;width:17px;height:15px;background:#EDEBE0"></div>
<div class="a" style="left:25px;top:791px;width:65px;height:21px;background:linear-gradient(#FDFDFB,#F6F5F0 60%,#EFEDE4);border:1px solid #B0AC9A;border-bottom:none;border-radius:3px 3px 0 0"></div>
<div class="a" style="left:47px;top:795px;color:#444;white-space:nowrap;font-size:10.6px">Task List</div>
<div class="a" style="left:89px;top:791px;width:68px;height:21px;background:linear-gradient(#FDFDFB,#F6F5F0 60%,#EFEDE4);border:1px solid #B0AC9A;border-bottom:none;border-radius:3px 3px 0 0"></div>
<div class="a" style="left:111px;top:795px;color:#444;white-space:nowrap;font-size:10.6px">Error List</div>
<div class="a" style="left:156px;top:791px;width:59px;height:21px;background:linear-gradient(#FDFDFB,#F6F5F0 60%,#EFEDE4);border:1px solid #B0AC9A;border-bottom:none;border-radius:3px 3px 0 0"></div>
<div class="a" style="left:178px;top:795px;color:#444;white-space:nowrap;font-size:10.6px">Output</div>
<div class="a" style="left:214px;top:791px;width:108px;height:21px;background:linear-gradient(#FDFDFB,#F6F5F0 60%,#EFEDE4);border:1px solid #B0AC9A;border-bottom:none;border-radius:3px 3px 0 0"></div>
<div class="a" style="left:237px;top:795px;color:#444;white-space:nowrap;font-size:10.6px">Pending Changes</div>
<div class="a" style="left:321px;top:791px;width:120px;height:21px;background:linear-gradient(#FDFDFB,#F6F5F0 60%,#EFEDE4);border:1px solid #B0AC9A;border-bottom:none;border-radius:3px 3px 0 0"></div>
<div class="a" style="left:343px;top:795px;color:#444;white-space:nowrap;font-size:10.6px">Find Symbol Results</div>
<svg class="a" style="left:29px;top:793px" width="16" height="16" viewBox="0 0 16 16"><rect x="1.5" y="3.5" width="11" height="11" fill="#F8F4F0" stroke="#8A8070"/><rect x="4" y="1" width="6" height="4" fill="#E8E0C0" stroke="#8A7A50" stroke-width=".8"/><path d="M3 9l3 3 6-8" stroke="#D02020" stroke-width="2" fill="none"/></svg>
<svg class="a" style="left:93px;top:793px" width="16" height="16" viewBox="0 0 16 16"><rect x="1.5" y="3.5" width="10" height="10" fill="#F8F8F4" stroke="#8A8070"/><rect x="4" y="1" width="5" height="4" fill="#E8E0C0" stroke="#8A7A50" stroke-width=".8"/><circle cx="11" cy="11.5" r="4.5" fill="#E03A2A"/><path d="M9 9.5l4 4M13 9.5l-4 4" stroke="#fff" stroke-width="1.3"/></svg>
<svg class="a" style="left:161px;top:793px" width="16" height="16" viewBox="0 0 16 16"><rect x="0.5" y="1.5" width="13" height="13" fill="#E8EEF8" stroke="#3A5AA8"/><path d="M3 5h8M3 7.5h8M3 10h8M3 12.5h6" stroke="#3A5AA8"/></svg>
<svg class="a" style="left:217px;top:793px" width="16" height="16" viewBox="0 0 16 16"><rect x="0.5" y="0.5" width="12" height="15" fill="#E8EEF8" stroke="#5A7AB8"/><rect x="1" y="1" width="11" height="3" fill="#6A90D8"/><rect x="3.5" y="6.5" width="6" height="8" fill="#fff" stroke="#6A7AAA"/><path d="M13 4l3 3h-2v5h-2V7h-2z" fill="#3A70C0"/></svg>
<svg class="a" style="left:325px;top:793px" width="16" height="16" viewBox="0 0 16 16"><path d="M5 1h8l2 4-5 5H5z" fill="#C8D8F0" stroke="#5A7AB8"/><path d="M10 4l5 4-3 3z" fill="#F0C030"/><path d="M1 15l3-7 3 7M2.5 12h3" stroke="#222" stroke-width="2" fill="none"/></svg>
<div class="a" style="left:0;top:811px;width:1152px;height:23px;background:linear-gradient(#F2F0E6,#EAE7D9);border-top:1px solid #B8B4A2"></div>
<div class="a" style="left:8px;top:818px;white-space:nowrap">Ready</div>
<div class="a" style="left:849px;top:818px;white-space:nowrap">Ln 192</div>
<div class="a" style="left:921px;top:818px;white-space:nowrap">Col 14</div>
<div class="a" style="left:1002px;top:818px;white-space:nowrap">Ch 14</div>
<div class="a" style="left:1112px;top:818px;white-space:nowrap">INS</div>
<div class="a" style="left:0;top:834px;width:1152px;height:30px;background:linear-gradient(#1B46B8 0px,#3A84F2 1px,#3272E8 3px,#2658D6 5px,#2454D2 14px,#2862E0 24px,#2254CC 27px,#1A40A8 30px)"></div>
<div class="a" style="left:1060px;top:834px;width:92px;height:30px;background:linear-gradient(#1A5AB8 0px,#3AB4FA 1px,#22A0F2 3px,#128CE8 8px,#0F88E4 22px,#0F7AD4 30px);border-left:1px solid #0A3A9A"></div>
<div class="a" style="left:1095px;top:843px;color:#fff;white-space:nowrap">3:36 PM</div>
<div class="a" style="left:1050px;top:838px;width:19px;height:19px;border-radius:50%;background:radial-gradient(circle at 40% 35%,#9ACCFF,#3A86E8 55%,#1A5AC0);border:1px solid #A8D4FF"></div>
<svg class="a" style="left:1054px;top:842px" width="12" height="12" viewBox="0 0 12 12"><path d="M8 2L4 6l4 4" stroke="#fff" stroke-width="2.2" fill="none"/></svg>
<svg class="a" style="left:1070px;top:840px" width="16" height="16" viewBox="0 0 16 16"><rect x="6.5" y="0.5" width="8" height="7" fill="#B8D8F8" stroke="#2A4A88" stroke-width=".8"/><rect x="1.5" y="5.5" width="8" height="7" fill="#C8E0FA" stroke="#2A4A88" stroke-width=".8"/><path d="M3 14h5M9 10h5" stroke="#E8E8F0" stroke-width="1.5"/></svg>
<div class="a" style="left:0;top:834px;width:95px;height:30px;border-radius:0 8px 10px 0;background:linear-gradient(#3A7A3A 0px,#8ACB8A 1px,#5AB25A 3px,#3EA43E 6px,#38A038 16px,#2F922F 25px,#287A28 30px);box-shadow:inset -4px 0 5px rgba(0,50,0,.35)"></div>
<svg class="a" style="left:10px;top:839px" width="20" height="18" viewBox="0 0 20 18"><path d="M2 4c3-2 5-2 8-1l-1.5 5.5c-3-1-5-1-8 1z" fill="#F06A2A"/><path d="M11 3.5c3 1 5 1 8-1l-1.5 5.5c-3 2-5 2-8 1z" fill="#86D24A"/><path d="M0.3 10c3-2 5-2 8-1L7 14.5c-3-1-5-1-8 1z" fill="#4A8AF0"/><path d="M9.3 9.5c3 1 5 1 8-1L16 14c-3 2-5 2-8 1z" fill="#F8C828"/></svg>
<div class="a" style="left:35px;top:838px;color:#fff;font-weight:bold;font-style:italic;font-size:17.5px;white-space:nowrap;text-shadow:1px 1px 1px #1A5A1A">start</div>
<svg class="a" style="left:108px;top:840px" width="16" height="17" viewBox="0 0 16 17"><path d="M4 9h9c0-4-2-6-5-6S3 5 3 9s2 6 5 6c2 0 4-1 5-3" fill="none" stroke="#2A8AE8" stroke-width="2.6"/><path d="M1 13c-1-3 4-8 10-10 3-1 5 0 4 2" fill="none" stroke="#8ACAF8" stroke-width="1.2"/></svg>
<svg class="a" style="left:132px;top:840px" width="16" height="17" viewBox="0 0 16 17"><circle cx="8" cy="8.5" r="7.5" fill="#E8701A"/><circle cx="9" cy="7" r="4.5" fill="#3A6AC0"/><path d="M1 8c1 6 6 8 10 7-4-1-6-4-5-8z" fill="#F29A2A"/></svg>
<svg class="a" style="left:155px;top:840px" width="16" height="17" viewBox="0 0 16 17"><rect x="0.5" y="1.5" width="15" height="14" fill="#5AA8F0" stroke="#2A78D0"/><path d="M1 6l14-3M1 10l14-3M1 14l14-3" stroke="#9AD0FA"/></svg>
<svg class="a" style="left:178px;top:840px" width="16" height="17" viewBox="0 0 16 17"><rect x="1" y="2" width="12" height="13" rx="2" fill="#fff" stroke="#1A4AA0" stroke-width="1.5"/><rect x="3" y="4" width="8" height="9" fill="#3A7AD8"/><path d="M5 7h4M5 10h4" stroke="#fff"/><path d="M11 1l4 2-3 3z" fill="#F0C020"/></svg>
<svg class="a" style="left:206px;top:840px" width="10" height="8" viewBox="0 0 10 8"><path d="M1 1l3 3-3 3M5 1l3 3-3 3" stroke="#D8E6FF" stroke-width="1.4" fill="none"/></svg>
<div class="task" style="left:223px;width:160px;background:linear-gradient(#5A9AFA 0px,#3C86F4 3px,#3C80F0 18px,#3272E4 22px);border:1px solid #2A5ED0;box-shadow:inset 1px 1px 0 #7AB4FF">Display scheduler tim...</div>
<div class="task" style="left:383px;width:160px;background:linear-gradient(#1E4EC8 0px,#1A48C0 3px,#1C4CC4 18px,#2454CC 22px);border:1px solid #153A9A;box-shadow:inset 1px 1px 1px #0E2E8A">EMR - Microsoft Visua...</div>
<div class="task" style="left:544px;width:158px;background:linear-gradient(#5A9AFA 0px,#3C86F4 3px,#3C80F0 18px,#3272E4 22px);border:1px solid #2A5ED0;box-shadow:inset 1px 1px 0 #7AB4FF">Report on EMR (Last ...</div>
<div class="task" style="left:703px;width:159px;background:linear-gradient(#5A9AFA 0px,#3C86F4 3px,#3C80F0 18px,#3272E4 22px);border:1px solid #2A5ED0;box-shadow:inset 1px 1px 0 #7AB4FF">untitled - Paint</div>
<svg class="a" style="left:232px;top:842px" width="16" height="16" viewBox="0 0 16 16"><circle cx="8" cy="8" r="7.5" fill="#E8701A"/><circle cx="9" cy="6.5" r="4.5" fill="#3A6AC0"/><path d="M1 8c1 6 6 8 10 7-4-1-6-4-5-8z" fill="#F29A2A"/></svg>
<svg class="a" style="left:392px;top:844px" width="18" height="12" viewBox="0 0 18 12"><ellipse cx="5" cy="6" rx="4.5" ry="4" fill="#9FD6A0"/><ellipse cx="12.5" cy="6" rx="4.5" ry="4" fill="#8EC8E0"/><path d="M4 9L10 2h3L7 10z" fill="#F26A1A"/><circle cx="13" cy="8" r="2.2" fill="#F2C21A"/><circle cx="5" cy="5" r="1.8" fill="#F5D040"/></svg>
<svg class="a" style="left:553px;top:842px" width="16" height="16" viewBox="0 0 16 16"><rect x="1.5" y="0.5" width="12" height="15" fill="#fff" stroke="#3A4A70"/><rect x="0" y="3" width="9" height="8" fill="#2A4AA0"/><text x="1" y="10" font-size="8" font-weight="bold" fill="#fff" font-family="Liberation Sans">W</text><path d="M10 5h2M10 8h2M4 12h7" stroke="#6A7A9A"/></svg>
<svg class="a" style="left:712px;top:841px" width="16" height="17" viewBox="0 0 16 17"><path d="M3 2l3 13h5l3-13z" fill="#E8D070" stroke="#6A5A20" stroke-width=".8"/><path d="M4 3l2 4M8 2v5M12 3l-2 4" stroke="#D03020" stroke-width="2"/><path d="M5 9h6" stroke="#2A8A2A" stroke-width="2"/></svg>
</body></html>
